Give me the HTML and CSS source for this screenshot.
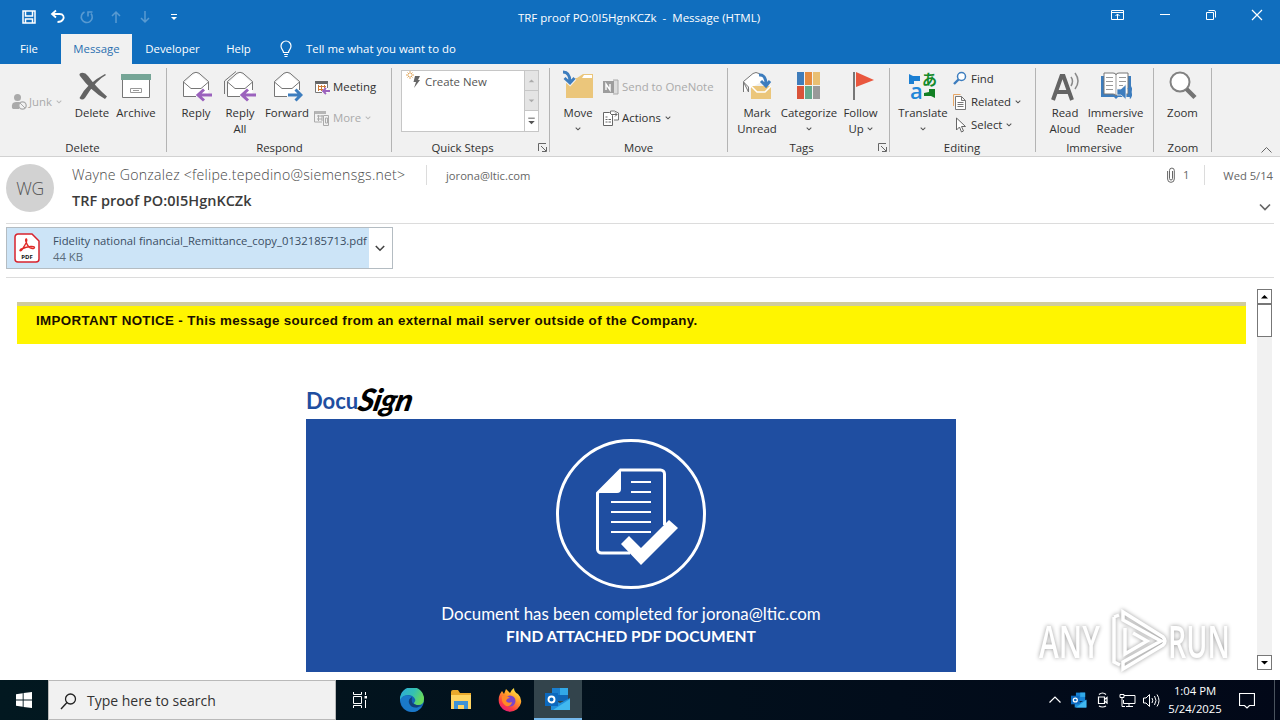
FILE: index.html
```html
<!DOCTYPE html>
<html lang="en">
<head>
<meta charset="utf-8">
<title>Message (HTML)</title>
<link rel="stylesheet" href="styles.css">
</head>
<body>
<svg class="defs" width="0" height="0">
  <symbol id="chev" viewBox="0 0 6 6"><path d="M.7 1.7L3 3.8L5.3 1.7" fill="none" stroke="currentColor" stroke-width="1.1"/></symbol>
  <symbol id="launch" viewBox="0 0 9 9"><path d="M.5 8V.5H8M3 3l5 5M8.500 4v4.500H4" fill="none" stroke="#666"/></symbol>
  <symbol id="envelope" viewBox="0 0 32 32"><path d="M3.500 13.500L16 2.500L28.500 13.500V26.500H3.500Z" fill="#fff"/><path d="M16 26.500H3.500V11.500L13 3.200q3-1.800 6 0L28.500 11.500V20M3.500 12L11 18.500H21L28.500 12" fill="none" stroke="#767676"/></symbol>
</svg>
<div class="screen">
  <header class="titlebar">
    <div class="quick">
      <svg width="16" height="16" viewBox="0 0 16 16"><path d="M2 2h12v12H2zM4.500 2v5h7V2M4.500 14V10h7v4" fill="none" stroke="#fff" stroke-width="1.5"/></svg>
      <svg width="16" height="16" viewBox="0 0 16 16"><path d="M6 1.500L2 5L6 8.500M2.500 5H9.500C13.500 5 14.500 8 13 10.500Q11.500 13 7.500 13" fill="none" stroke="#fff" stroke-width="1.800"/></svg>
      <svg class="dim" width="16" height="16" viewBox="0 0 16 16"><path d="M5.500 3A5.500 5.500 0 1 0 12 4.500M9 7.500V3H13.500" fill="none" stroke="#fff" stroke-width="1.600"/></svg>
      <svg class="dim" width="16" height="16" viewBox="0 0 16 16"><path d="M8 14V3M4 7l4-4l4 4" fill="none" stroke="#fff" stroke-width="1.500"/></svg>
      <svg class="dim" width="16" height="16" viewBox="0 0 16 16"><path d="M8 2v11M4 9l4 4l4-4" fill="none" stroke="#fff" stroke-width="1.500"/></svg>
      <svg width="16" height="16" viewBox="0 0 16 16"><path d="M5 5.500h6" stroke="#fff"/><path d="M5 8h6l-3 3z" fill="#fff"/></svg>
    </div>
    <div class="title">TRF proof PO:0I5HgnKCZk&nbsp; -&nbsp; Message (HTML)</div>
    <div class="winctl">
      <svg width="14" height="12" viewBox="0 0 14 12"><path d="M.5 1.500h12v9H.5zM.5 3.500h12M6.500 10V5M4.500 7l2-2l2 2" fill="none" stroke="#fff"/></svg>
      <svg width="12" height="12" viewBox="0 0 12 12"><path d="M1 5.500h10" stroke="#fff"/></svg>
      <svg width="12" height="12" viewBox="0 0 12 12"><path d="M1.500 3.500h7v7h-7zM3.500 1.500H9a1.500 1.500 0 0 1 1.500 1.500V8.500" fill="none" stroke="#fff"/></svg>
      <svg width="12" height="12" viewBox="0 0 12 12"><path d="M1 1l10 10M11 1L1 11" stroke="#fff" stroke-width="1.200"/></svg>
    </div>
  </header>
  <nav class="tabs">
    <span class="tab file">File</span><span class="tab active">Message</span><span class="tab dev">Developer</span><span class="tab help">Help</span>
    <svg class="bulb" width="14" height="18" viewBox="0 0 14 18"><path d="M4.500 12.500C4.500 10 2 9.500 2 6a5 5 0 0 1 10 0c0 3.500-2.500 4-2.500 6.500zM5 14.500h4M5.500 16.500h3" fill="none" stroke="#fff" stroke-width="1.200"/></svg>
    <span class="tell">Tell me what you want to do</span>
  </nav>

  <section class="ribbon">
    <div class="group g-delete">
      <div class="tools">
        <div class="junk"><svg width="17" height="18" viewBox="0 0 17 18"><circle cx="6.500" cy="4.500" r="3.500" fill="#aaa"/><path d="M1 15Q0 9 5 9h4l-1 7H2z" fill="#aaa"/><circle cx="11.500" cy="12.500" r="3.700" fill="#f1f1f1" stroke="#aaa" stroke-width="1.300"/><path d="M9 10l5 5" stroke="#aaa"/></svg>Junk<svg class="chev"><use href="#chev"/></svg></div>
        <div class="big w40"><svg viewBox="0 0 32 32"><path d="M5 3Q9 2 12 6Q20 17 31 26.500L29 29Q15 21 4 6Q2.500 4 5 3zM30 5Q20 10 9 28Q6 31 3.500 28Q10 14 29 4z" fill="#646464"/></svg><span>Delete</span></div>
        <div class="big w48"><svg viewBox="0 0 32 32"><path d="M2.500 9h27v18.500h-27z" fill="#fff" stroke="#767676"/><path d="M1 4h30v6H1z" fill="#75a596"/><path d="M10.500 18.500h11v4h-11zM13 20.500h6" fill="none" stroke="#999"/></svg><span>Archive</span></div>
      </div><div class="glabel">Delete</div>
    </div>
    <div class="group g-respond">
      <div class="tools">
        <div class="big w44"><svg viewBox="0 0 32 32"><use href="#envelope"/><path d="M32 25H18M24 19.500L18 25L24 30.500" fill="none" stroke="#9b62bd" stroke-width="3"/></svg><span>Reply</span></div>
        <div class="big w44"><svg viewBox="0 0 32 32"><path d="M.5 24V11L12 1.500" fill="none" stroke="#767676"/><use href="#envelope"/><path d="M32 25H18M24 19.500L18 25L24 30.500" fill="none" stroke="#9b62bd" stroke-width="3"/></svg><span>Reply<br>All</span></div>
        <div class="big w50"><svg viewBox="0 0 32 32"><use href="#envelope"/><path d="M17 25H30M24.500 19.500L30 25L24.500 30.500" fill="none" stroke="#3d7dbe" stroke-width="3"/></svg><span>Forward</span></div>
        <div class="rows two">
          <div><svg width="16" height="16" viewBox="0 0 16 16"><path d="M1 3h13v11H1z" fill="#fff"/><path d="M1 2h13v3H1z" fill="#666"/><path d="M1.500 4v9.500H8M13.500 4v5" fill="none" stroke="#777"/><path d="M4 7.500h8M4 10.500h5M4.500 6v6M7.500 6v6M10.500 6v3" fill="none" stroke="#cf7a36"/><path d="M16 12H9M12 9l-3 3l3 3" fill="none" stroke="#9b62bd" stroke-width="1.800"/></svg>Meeting</div>
          <div class="off"><svg width="16" height="16" viewBox="0 0 16 16"><path d="M0 1h12v3H0z" fill="#b5b5b5"/><path d="M.5 2v10H8M3 6h6M3 9h5M4.500 5v6M8 5v6M9.500 5.500h5v10h-5zM11.500 8h2v5h-2z" fill="none" stroke="#aaa"/></svg>More<svg class="chev"><use href="#chev"/></svg></div>
        </div>
      </div><div class="glabel">Respond</div>
    </div>
    <div class="group g-quick">
      <div class="gallery"><div class="gmain"><svg width="16" height="18" viewBox="0 0 16 18"><path d="M9 5h5l-2 4h2L8 17L10 11H7.500z" fill="#666"/><path d="M4 0v8M0 4h8M1.500 1.500l5 5M6.500 1.500l-5 5" stroke="#e0a860" stroke-width="1"/><circle cx="4" cy="4" r="1.300" fill="#fff"/></svg>Create New</div>
        <div class="gside"><i><svg viewBox="0 0 14 20"><path d="M4 12h6l-3-3z" fill="#aaa"/></svg></i><i><svg viewBox="0 0 14 20"><path d="M4 9h6l-3 3z" fill="#aaa"/></svg></i><i><svg viewBox="0 0 14 20"><path d="M3.500 7.500h7" stroke="#555"/><path d="M3.500 10.500h7l-3.500 3.500z" fill="#555"/></svg></i></div></div>
      <div class="glabel">Quick Steps</div><svg class="launch"><use href="#launch"/></svg>
    </div>
    <div class="group g-move">
      <div class="tools">
        <div class="big w44"><svg viewBox="0 0 32 32"><path d="M4 8h11l6-4h10v24H4z" fill="#ebc67b"/><path d="M22 5h8v3h-10z" fill="#fff"/><path d="M1 1Q8 1 8 11M3 8.500L8 13L12.500 8" fill="none" stroke="#f1f1f1" stroke-width="5"/><path d="M1 2Q8 2 8 12M2.500 8L8 13L12.500 8" fill="none" stroke="#3d7dbe" stroke-width="2.800"/></svg><span>Move<br><svg class="chev"><use href="#chev"/></svg></span></div>
        <div class="rows two">
          <div class="off"><svg width="16" height="16" viewBox="0 0 16 16"><path d="M10 1h5v14h-5" fill="#ddd" stroke="#aaa"/><path d="M0 2h11v12H0z" fill="#9d9d9d"/><path d="M3 11V5l4 6V5" fill="none" stroke="#fff" stroke-width="1.400"/></svg>Send to OneNote</div>
          <div><svg width="16" height="16" viewBox="0 0 16 16"><path d="M7.500 3V1h4l4 2v7H11" fill="#fff" stroke="#777"/><path d="M.5 2.500h6l3 3v10H.5zM2.500 7h2M2.500 9.500h2M2.500 12h2M5.500 9.500H8M5.500 12H8" fill="#fff" stroke="#666"/><path d="M9 4.500h5M12 2.500l2 2l-2 2" fill="none" stroke="#666"/></svg>Actions<svg class="chev"><use href="#chev"/></svg></div>
        </div>
      </div><div class="glabel">Move</div>
    </div>
    <div class="group g-tags">
      <div class="tools">
        <div class="big w46"><svg viewBox="0 0 32 32"><path d="M2.500 22V11.500L12 3.500q3-2 6 0l7 6" fill="#fff" stroke="#777"/><path d="M2.500 12l5 5v5z" fill="#f1f1f1" stroke="#777"/><path d="M10 16h20v13H10z" fill="#ebc67b"/><path d="M10 16l6 6h8l6-6" fill="none" stroke="#fff" stroke-width="1.500"/><path d="M18 5q7-1 7 10M20 11l5 5l4-5" fill="none" stroke="#3d7dbe" stroke-width="3"/></svg><span>Mark<br>Unread</span></div>
        <div class="big w58"><svg viewBox="0 0 32 32"><path d="M4 2h7v13H4z" fill="#3f7cba"/><path d="M12 2h7v13h-7z" fill="#e58b40"/><path d="M20 2h7v13h-7z" fill="#e9bf72"/><path d="M4 16h7v13H4z" fill="#d95339"/><path d="M12 16h7v13h-7z" fill="#65a88c"/><path d="M20 16h7v13h-7z" fill="#999"/></svg><span>Categorize<br><svg class="chev"><use href="#chev"/></svg></span></div>
        <div class="big w45"><svg viewBox="0 0 32 32"><path d="M9 2v28" stroke="#777" stroke-width="2"/><path d="M11 2l18 8l-18 7z" fill="#e9573e"/></svg><span>Follow<br>Up <svg class="chev"><use href="#chev"/></svg></span></div>
      </div><div class="glabel">Tags</div><svg class="launch"><use href="#launch"/></svg>
    </div>
    <div class="group g-edit">
      <div class="tools">
        <div class="big w48"><div class="trans"><svg class="t1" viewBox="0 0 32 32"><path d="M2 4l4 2h7v5H7v3H2z"/><path class="green" d="M28 19v9l-4-2h-7v-3l5-1v-3z"/></svg><b>a</b><em>あ</em></div><span>Translate<br><svg class="chev"><use href="#chev"/></svg></span></div>
        <div class="rows three">
          <div><svg width="14" height="16" viewBox="0 0 14 16"><circle cx="8.500" cy="5.500" r="4" fill="#fff" stroke="#3d7dbe" stroke-width="1.500"/><path d="M5.500 8.500L1 13" stroke="#3d7dbe" stroke-width="2.400"/></svg>Find</div>
          <div><svg width="14" height="16" viewBox="0 0 14 16"><path d="M.5 12V.5h7" fill="none" stroke="#e8a766"/><path d="M2.500 2.500h6l4 4v9h-10zM8.500 2.500v4h4M4.500 8.500h6M4.500 10.500h6M4.500 12.500h6" fill="#fff" stroke="#777"/></svg>Related<svg class="chev"><use href="#chev"/></svg></div>
          <div><svg width="14" height="16" viewBox="0 0 14 16"><path d="M3.500 1v12l3-3l2 5l2-1l-2-4.500h4z" fill="#fff" stroke="#666"/></svg>Select<svg class="chev"><use href="#chev"/></svg></div>
        </div>
      </div><div class="glabel">Editing</div>
    </div>
    <div class="group g-imm">
      <div class="tools">
        <div class="big w40"><svg viewBox="0 0 32 32"><path d="M4 30L12.500 6H14.500L23 30M7 22H20" fill="none" stroke="#646464" stroke-width="4"/><path d="M22 7q3 4 0 9M26 3q6 8 0 16" fill="none" stroke="#8a8a8a" stroke-width="1.500"/></svg><span>Read<br>Aloud</span></div>
        <div class="big w61"><svg viewBox="0 0 32 32"><path d="M1 6h30v21H18l-2 2l-2-2H1z" fill="#3d7dbe"/><path d="M4 3h9q3 0 3 2q0-2 3-2h9v21h-9q-3 0-3 2q0-2-3-2H4z" fill="#fff" stroke="#777"/><path d="M16 5v20M6 7.500h7M6 11.500h7M6 15.500h7M6 19.500h7M19 7.500h7M19 11.500h7M19 15.500h4" stroke="#999"/><path d="M17 19h4l5-4.500v15l-5-4.500h-4z" fill="#3d7dbe" stroke="#f1f1f1" stroke-width=".8"/><path d="M28 18q3 4 0 8M30 15.500q4 6.500 0 13" fill="none" stroke="#3d7dbe" stroke-width="1.300"/></svg><span>Immersive<br>Reader</span></div>
      </div><div class="glabel">Immersive</div>
    </div>
    <div class="group g-zoom">
      <div class="tools"><div class="big w56"><svg viewBox="0 0 32 32"><circle cx="13" cy="12" r="9.500" fill="#fff" stroke="#828282" stroke-width="2"/><path d="M19.500 19L28 27.500" stroke="#747474" stroke-width="4.500"/></svg><span>Zoom</span></div></div>
      <div class="glabel">Zoom</div>
    </div>
    <svg class="collapse" width="11" height="6" viewBox="0 0 11 6"><path d="M.5 5.500l5-5l5 5" fill="none" stroke="#666"/></svg>
  </section>

  <section class="head">
    <div class="avatar">WG</div>
    <div class="who">
      <div class="line1"><span class="from">Wayne Gonzalez &lt;felipe.tepedino@siemensgs.net&gt;</span><span class="to">jorona@ltic.com</span></div>
      <div class="subject">TRF proof PO:0I5HgnKCZk</div>
    </div>
    <div class="meta">
      <div class="line1"><svg width="8" height="16" viewBox="0 0 8 16"><path d="M5.500 4v7.500a1.500 1.500 0 0 1-3 0V3.500a2.300 2.300 0 0 1 4.800 0V12a3.300 3.300 0 0 1-6.700 0V4" fill="none" stroke="#666"/></svg><span class="cnt">1</span><span class="date">Wed 5/14</span></div>
      <svg class="expand" width="12" height="8" viewBox="0 0 12 8"><path d="M1 1.500l5 5l5-5" fill="none" stroke="#666" stroke-width="1.700"/></svg>
    </div>
  </section>
  <section class="attach">
    <div class="card">
      <div class="filebox">
        <svg width="26" height="30" viewBox="0 0 26 30"><path d="M4 1h14l7 7v18a3 3 0 0 1-3 3H4a3 3 0 0 1-3-3V4a3 3 0 0 1 3-3z" fill="#fff" stroke="#d8232e" stroke-width="1.500"/><path d="M12.500 6c-2 0 0 5 2 7.500s6 2.500 6 1s-6-1.500-13 1.500c-3 1.500-1 3 1 0s5.500-8.500 4-10z" fill="none" stroke="#e02a27" stroke-width="1.400"/><text x="13" y="25.500" text-anchor="middle" class="pdf">PDF</text></svg>
        <div class="ftext"><div class="fname">Fidelity national financial_Remittance_copy_0132185713.pdf</div><div class="fsize">44 KB</div></div>
      </div>
      <div class="drop"><svg width="10" height="7" viewBox="0 0 10 7"><path d="M.8 1l4.200 4.200L9.200 1" fill="none" stroke="#444" stroke-width="1.600"/></svg></div>
    </div>
  </section>

  <main class="body">
    <div class="content">
      <div class="notice">IMPORTANT NOTICE - This message sourced from an external mail server outside of the Company.</div>
      <article class="doc">
        <div class="logo"><span class="docu">Docu</span><span class="sign">Sign</span></div>
        <div class="panel">
          <svg width="150" height="150" viewBox="0 0 150 150"><circle cx="75" cy="75" r="73.500" fill="none" stroke="#fff" stroke-width="3"/><path d="M108.500 86V35a4 4 0 0 0-4-4H64.500L41.500 54V110a4 4 0 0 0 4 4H74" fill="none" stroke="#fff" stroke-width="3"/><path d="M41 54L65 30V50a4 4 0 0 1-4 4z" fill="#fff"/><path d="M75 43h20M75 53h20M55 63h40M55 73h40M55 83h40M55 93h40" stroke="#fff" stroke-width="2"/><path d="M65 105l8-8L85 109L113 81L122 89L85 126z" fill="#fff"/></svg>
          <div class="done">Document has been completed for jorona@ltic.com</div>
          <div class="find">FIND ATTACHED PDF DOCUMENT</div>
        </div>
      </article>
    </div>
    <div class="scroll"><div class="sbtn"><svg viewBox="0 0 13 13"><path d="M3 8.500h7L6.500 5z" fill="#000"/></svg></div><div class="thumb"></div><div class="sbtn end"><svg viewBox="0 0 13 13"><path d="M3 5h7L6.500 8.500z" fill="#000"/></svg></div></div>
    <div class="mark"><span>ANY</span><svg width="58" height="64" viewBox="0 0 58 64"><path d="M14 4V12L52 33L14 54V61L54 37Q58 33 54 29ZM14 4M5 9V54L11 57M16 20V46L38 33L24 25M5 9L10 7" fill="none" stroke="#fff" stroke-width="3.500"/></svg><span>RUN</span></div>
  </main>

  <footer class="taskbar">
    <div class="start"><svg width="16" height="16" viewBox="0 0 16 16"><path d="M0 2.300L6.700 1.300V7.500H0zM7.600 1.100L16 0V7.500H7.600zM0 8.500H6.700V14.700L0 13.700zM7.600 8.500H16V16L7.600 14.900z" fill="#fff"/></svg></div>
    <div class="search"><svg width="17" height="17" viewBox="0 0 17 17"><circle cx="10.500" cy="6" r="5" fill="none" stroke="#222" stroke-width="1.300"/><path d="M7 9.500L1 16" stroke="#222" stroke-width="1.400"/></svg>Type here to search</div>
    <div class="app view"><svg width="16" height="16" viewBox="0 0 16 16"><path d="M1.500 4.500h8v7h-8zM1.500 0v2.500h8V0M1.500 16v-2.500h8V16M13.500 0v3M13.500 8v8" fill="none" stroke="#fff"/><path d="M12.500 4h2.500v2.500h-2.500z" fill="#fff"/></svg></div>
    <div class="app"><svg width="24" height="24" viewBox="0 0 24 24"><defs><linearGradient id="e1" x1="0" y1="0" x2="1" y2=".4"><stop offset="0" stop-color="#2ba9df"/><stop offset=".6" stop-color="#35c1b1"/><stop offset="1" stop-color="#66d85c"/></linearGradient></defs><circle cx="12" cy="12" r="12" fill="#1463b4"/><path d="M0 11A12 12 0 0 1 24 11Q24 17 18 17Q14 17 14 15Q16 13 15 11Q13 7 8 7Q2 7 0 13z" fill="url(#e1)"/><path d="M0 12Q2 7 8 7.500Q11 8 12 9Q8 11 9 15Q11 20 17 19.500L22 18.500Q18 24 12 24Q2 23 0 12z" fill="#1a79c9"/><path d="M12 9Q8 11 9 15Q11 20 17 19.500L22 17Q18 18 14 16Q11 15 12 9z" fill="#123f78"/></svg></div>
    <div class="app"><svg width="22" height="20" viewBox="0 0 22 20"><path d="M1 2Q1 0 3 0h5l2 3h11v16H1z" fill="#e9a92c"/><path d="M1 5h20v14H1z" fill="#ffd563"/><path d="M4 11h14v8h-4v-4H8v4H4z" fill="#3e93d6"/></svg></div>
    <div class="app"><svg width="24" height="24" viewBox="0 0 24 24"><defs><linearGradient id="f1" x1=".8" y1="0" x2=".2" y2="1"><stop offset="0" stop-color="#fff14b"/><stop offset=".4" stop-color="#ff9a28"/><stop offset=".75" stop-color="#fb3b45"/><stop offset="1" stop-color="#e31587"/></linearGradient></defs><path d="M2 6l2-3l2 3l2-5l4 4q1-3 4-5q0 4 4 6q4 4 3 9a11.300 11.300 0 0 1-22 0Q0 10 2 6z" fill="url(#f1)"/><circle cx="12" cy="13" r="5.500" fill="#7b45c8"/><path d="M4 8q5-1 8 2q-3 0-4 3q2 3 6 1q-1 5-6 4q-5-3-4-10z" fill="#ff8a26"/></svg></div>
    <div class="app on"><svg width="26" height="24" viewBox="0 0 26 24"><path d="M7 1h16v13H7z" fill="#1066b5"/><path d="M15 1h8v7h-8z" fill="#32a9e7"/><path d="M7 1h8v7H7z" fill="#1a7fd0"/><path d="M6 12l9 4l10-5v12H6z" fill="#1e8fdc"/><path d="M8 23l17-11v11z" fill="#41b8ef"/><path d="M0 6h13v13H0z" fill="#0c69be"/><circle cx="6.500" cy="12.500" r="3" fill="none" stroke="#fff" stroke-width="1.900"/></svg></div>
    <div class="tray">
      <span><svg width="12" height="8" viewBox="0 0 12 8"><path d="M.5 6.500l5.500-5.500l5.500 5.500" fill="none" stroke="#fff" stroke-width="1.200"/></svg></span>
      <span><svg width="16" height="16" viewBox="0 0 26 24"><path d="M8 0h15v14H8z" fill="#1681d2"/><path d="M15 0h8v7h-8z" fill="#32a9e7"/><path d="M6 12l9 4l10-5v13H6z" fill="#1e8fdc"/><path d="M8 24l17-12v12z" fill="#41b8ef"/><path d="M0 5h14v14H0z" fill="#0c69be"/><circle cx="7" cy="12" r="3.200" fill="none" stroke="#fff" stroke-width="2"/></svg></span>
      <span><svg width="14" height="16" viewBox="0 0 14 16"><path d="M2.500 5h6v6.500h-6zM8.500 7.500L11 5.500v5.500L8.500 9M3 2.500q3.500-3 7 0M3 14q3.500 2 7 0" fill="none" stroke="#fff" stroke-width="1.200"/></svg></span>
      <span><svg width="17" height="15" viewBox="0 0 17 15"><path d="M5 2.500h11v8H4.500V7M10 10.500v3M7 13.500h7M1 1.500h4v3H1zM3 4.500v9h3" fill="none" stroke="#fff"/></svg></span>
      <span><svg width="17" height="15" viewBox="0 0 17 15"><path d="M.5 5h2.500l3.500-3.500v12L3 10H.5zM9 5q1.500 2.500 0 5M11.500 3q3 4.500 0 9M14 1.500q4 6 0 12" fill="none" stroke="#fff"/></svg></span>
    </div>
    <div class="clock">1:04 PM<br>5/24/2025</div>
    <svg class="action" width="16" height="17" viewBox="0 0 16 17"><path d="M.5 1.500h15v12h-5l-2.500 2.500l-2.500-2.500h-5z" fill="none" stroke="#fff" stroke-width="1.200"/></svg>
    <div class="peek"></div>
  </footer>
</div>
</body>
</html>
```

FILE: styles.css
```css
* { box-sizing: border-box; }
body { margin: 0; font: 12px/16px "Open Sans", "Noto Sans", sans-serif; color: #333; background: #fff; }
svg { flex: none; }
.defs { position: absolute; }
.screen { width: 1280px; height: 720px; overflow: hidden; display: flex; flex-direction: column; }

.titlebar { height: 34px; background: #106ebe; color: #fff; display: flex; align-items: center; font-size: 11.5px; }
.quick { display: flex; gap: 13px; padding-left: 21px; width: 500px; }
.dim { opacity: .3; }
.title { width: 278px; text-align: center; white-space: nowrap; padding-top: 1px; }
.winctl { display: flex; align-items: center; margin-left: auto; gap: 34px; padding: 0 17px 4px 0; }

.tabs { height: 30px; background: #106ebe; color: #fff; display: flex; align-items: center; font-size: 11.4px; }
.tab { height: 30px; line-height: 30px; text-align: center; }
.tab.file { width: 58px; margin-right: 3px; }
.tab.active { width: 71px; background: #f1f1f1; color: #2a6fb0; }
.tab.dev { width: 81px; }
.tab.help { width: 51px; }
.bulb { margin: 0 13px 0 15px; }
.tell { white-space: nowrap; }

.ribbon { height: 93px; flex: none; background: #f1f1f1; border-bottom: 1px solid #d2d2d2; display: flex; font-size: 11.4px; position: relative; color: #303030; }
.group { position: relative; height: 92px; flex: none; }
.group::after { content: ""; position: absolute; right: 0; top: 4px; height: 84px; width: 1px; background: #b4b4b4; }
.g-delete { width: 167px; }
.g-respond { width: 225px; padding-left: 7px; }
.g-quick { width: 158px; }
.g-move { width: 178px; padding-left: 6px; }
.g-tags { width: 162px; padding-left: 6px; }
.g-edit { width: 146px; padding-left: 9px; }
.g-imm { width: 118px; padding-left: 9px; }
.g-zoom { width: 58px; }
.tools { display: flex; height: 76px; }
.glabel { text-align: center; height: 16px; }
.g-delete .glabel { margin-right: 2px; }
.g-respond .glabel, .g-move .glabel { margin-left: -7px; }
.g-edit .glabel, .g-imm .glabel { margin: 0 1px 0 -10px; }
.g-quick .glabel { margin-right: 17px; }
.g-tags .glabel { margin: 0 14px 0 -7px; }
.launch { position: absolute; width: 9px; height: 9px; right: 3px; bottom: 4px; }
.big { padding-top: 6px; display: flex; flex-direction: column; align-items: center; text-align: center; white-space: nowrap; }
.big > svg, .trans { width: 32px; height: 32px; margin-bottom: 3px; flex: none; }
.w40 { width: 40px; } .w44 { width: 44px; } .w45 { width: 45px; } .w46 { width: 46px; } .w48 { width: 48px; }
.w50 { width: 50px; } .w56 { width: 57px; } .w58 { width: 58px; } .w61 { width: 61px; }
.chev { width: 6px; height: 6px; margin-left: 4px; vertical-align: 1px; color: #555; }
.big .chev { margin-left: 0; }
.junk { width: 72px; padding: 0 0 0 11px; display: flex; align-items: center; color: #aaa; gap: 1px; }
.junk .chev { margin-left: 3px; }
.junk .chev, .off .chev { color: #bbb; }
.rows .off { color: #aaa; }
.rows { display: flex; flex-direction: column; white-space: nowrap; padding-left: 3px; }
.g-respond .rows { padding-left: 2px; }
.rows > div { display: flex; align-items: center; gap: 3px; }
.rows .chev { margin-left: 1px; }
.rows.two > div { height: 31px; }
.rows.two { padding-top: 7px; }
.rows.three > div { height: 23px; gap: 4px; }
.rows.three { padding: 3px 0 0 6px; }
.rows.three .chev { margin-left: 0; }
.trans { position: relative; }
.trans .t1 { width: 32px; height: 32px; fill: #1b7fd3; }
.trans .green { fill: #128024; }
.trans b, .trans em { position: absolute; font-style: normal; }
.trans b { left: 3px; bottom: 3px; font: 600 22px/18px "Open Sans", sans-serif; color: #2286d8; }
.trans em { right: 2px; top: 1px; font: 700 15px/16px "Noto Sans CJK JP", sans-serif; color: #138a2a; }
.gallery { width: 138px; height: 62px; margin: 6px 0 8px 9px; border: 1px solid #c6c6c6; background: #fff; display: flex; }
.gmain { flex: 1; display: flex; align-items: flex-start; padding: 3px 0 0 4px; gap: 3px; color: #555; }
.gmain svg { margin-top: -3px; }
.gside { width: 14px; border-left: 1px solid #c6c6c6; display: flex; flex-direction: column; }
.gside i { height: 20px; background: #e4e4e4; border-bottom: 1px solid #c6c6c6; display: flex; }
.gside i:last-child { background: #fff; border: 0; }
.gside svg { width: 13px; height: 19px; }
.collapse { margin: 83px 0 0 49px; }

.head { height: 67px; flex: none; margin: 0 6px; border-bottom: 1px solid #dcdcdc; display: flex; }
.avatar { width: 48px; height: 48px; margin: 7px 18px 0 0; border-radius: 50%; background: #d2d2d2; color: #555; font-size: 17.5px; font-weight: 300; line-height: 49px; text-align: center; letter-spacing: -.3px; }
.line1 { display: flex; height: 22px; align-items: center; margin-top: 7px; color: #666; white-space: nowrap; }
.from { width: 355px; height: 20px; line-height: 20px; border-right: 1px solid #dcdcdc; font-size: 14.1px; font-weight: 300; color: #484848; letter-spacing: .25px; }
.to { padding: 2px 0 0 19px; font-size: 11.2px; }
.subject { font: 600 14.5px/20px "Open Sans", sans-serif; color: #3b3b3b; margin-top: 5px; }
.meta { margin-left: auto; font-size: 11.2px; display: flex; flex-direction: column; align-items: flex-end; }
.cnt { padding: 2px 15px 0 8px; height: 20px; border-right: 1px solid #dcdcdc; }
.date { padding: 2px 1px 0 18px; }
.expand { margin: 17px 3px 0 0; }

.attach { height: 54px; flex: none; margin: 0 6px; border-bottom: 1px solid #dcdcdc; padding-top: 3px; }
.card { width: 387px; height: 42px; border: 1px solid #b4bcc2; display: flex; }
.filebox { width: 362px; background: #cce4f7; display: flex; align-items: center; padding-left: 7px; gap: 13px; white-space: nowrap; color: #3a4d63; font-size: 11.28px; }
.ftext { padding-top: 2px; }
.fsize { color: #5a6b7a; }
.pdf { font: 700 6px "Open Sans", sans-serif; fill: #111; }
.drop { flex: 1; display: flex; align-items: center; justify-content: center; padding-right: 2px; }

.body { height: 402px; flex: none; display: flex; position: relative; padding: 0 8px 8px 17px; }
.content { width: 1229px; margin-right: 11px; padding-top: 24px; }
.notice { height: 42px; background: #fff500; border-top: 4px solid #d0cc9c; padding: 7px 0 0 19px; font: 700 13.33px/16px "Liberation Sans", sans-serif; letter-spacing: .37px; color: #1a1000; }
.doc { width: 650px; margin: 34px 0 0 289px; }
.logo { height: 41px; display: flex; align-items: flex-start; white-space: nowrap; }
.docu { font: 700 22px/24px Lato, sans-serif; color: #1f4ea0; padding-top: 11px; }
.sign { font: italic 900 31px/36px Lato, sans-serif; color: #000; transform: skewX(-12deg); transform-origin: 0 70%; padding-top: 3px; letter-spacing: -.8px; }
.panel { height: 253px; background: #1f4ea1; color: #fff; display: flex; flex-direction: column; align-items: center; padding-top: 20px; }
.done { font: 400 16.9px/22px Lato, sans-serif; margin-top: 14px; }
.find { font: 700 15.55px/22px Lato, sans-serif; }
.scroll { width: 15px; margin-top: 11px; height: 381px; background: #f1f1f1; display: flex; flex-direction: column; }
.sbtn { height: 15px; border: 1px solid #777; background: #fff; display: flex; }
.sbtn.end { margin-top: auto; }
.thumb { height: 33px; border: 1px solid #777; background: #fff; }
.mark { position: absolute; left: 1039px; top: 330px; width: 194px; display: flex; align-items: center; justify-content: space-between; color: #fff; filter: drop-shadow(0 0 2px #999); }
.mark span { font: 600 46px/60px "Open Sans", sans-serif; width: 68px; transform: scaleX(.65); transform-origin: 0 50%; white-space: nowrap; }
.mark span:last-child { width: 65px; transform: scaleX(.62); }

.taskbar { height: 40px; flex: none; background: #02121c linear-gradient(90deg, #021820, #020d1b 70%, #020818); display: flex; align-items: center; color: #fff; }
.start { width: 48px; display: flex; justify-content: center; }
.search { width: 288px; height: 40px; background: #f1f1f1; border: 1px solid #b9b9b9; display: flex; align-items: center; gap: 10px; padding: 2px 0 0 11px; color: #333; font-size: 14px; }
.app { width: 49px; height: 40px; display: flex; align-items: center; justify-content: center; }
.app.on { background: #33444c; border-bottom: 2px solid #76b9ed; width: 48px; }
.app.view { width: 48px; margin-right: 3px; }
.tray { margin-left: auto; display: flex; align-items: center; }
.tray span { width: 24px; display: flex; justify-content: center; }
.clock { width: 64px; text-align: center; font-size: 11.3px; line-height: 18px; white-space: nowrap; }
.action { margin: 0 19px 0 12px; }
.peek { width: 1px; height: 40px; background: #4a535e; margin-right: 5px; }
```
